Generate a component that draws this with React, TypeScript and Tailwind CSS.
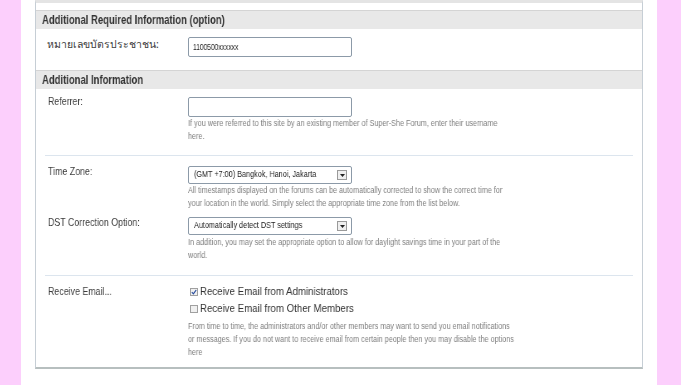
import React from "react";

const FONT = '"Liberation Sans", Arial, sans-serif';

function SelectBox({ text }: { text: string }) {
  return (
    <div className="relative w-[164px] h-[18px] rounded-[2px] border border-[#8c9aa8] bg-white flex items-center pl-[5px] text-[9.3px] text-[#222]">
      <span className="inline-block origin-left scale-x-[0.78] whitespace-nowrap will-change-transform">{text}</span>
      <div className="absolute right-[4px] top-[3px] w-[10px] h-[10px] border border-[#9a9a9a] bg-[#efefef] flex items-center justify-center">
        <svg width="5" height="3" viewBox="0 0 5 3">
          <path d="M0 0 L5 0 L2.5 3 Z" fill="#222" />
        </svg>
      </div>
    </div>
  );
}

function Help({ lines }: { lines: string[] }) {
  return (
    <div className="text-[8.7px] leading-[13px] text-[#7e7e7e]">
      {lines.map((l, i) => (
        <div key={i} className="whitespace-nowrap">
          <span className="inline-block origin-left scale-x-[0.83] will-change-transform">{l}</span>
        </div>
      ))}
    </div>
  );
}

function Label({ text }: { text: string }) {
  return (
    <span className="inline-block origin-left scale-x-[0.79] whitespace-nowrap will-change-transform">{text}</span>
  );
}

function Header({ text }: { text: string }) {
  return (
    <div className="h-[19px] border-t border-[#d4d4d4] bg-[#e8e8e8] pl-[6px] flex items-center text-[12px] font-bold text-[#333]">
      <span className="inline-block origin-left scale-x-[0.79] whitespace-nowrap will-change-transform">{text}</span>
    </div>
  );
}

function Checkbox({ checked }: { checked?: boolean }) {
  return (
    <div className="w-[8px] h-[8px] border border-[#a0a0a0] bg-[#f0f0f0] flex items-center justify-center mr-[2px]">
      {checked && (
        <svg width="6" height="6" viewBox="0 0 6 6">
          <path d="M0.8 3.2 L2.4 4.8 L5.2 1" stroke="#2b4fa0" strokeWidth="1.2" fill="none" />
        </svg>
      )}
    </div>
  );
}

export default function App() {
  return (
    <div
      className="w-[681px] h-[385px] flex bg-white overflow-hidden antialiased"
      style={{ fontFamily: FONT }}
    >
      <div className="w-[21px] bg-[#fccffc]" />
      <div className="flex-1 px-[14px]">
        <div className="h-[369px] border-t-[3px] border-t-[#e4e4e4] border-x border-x-[#c6ced5] border-b-2 border-b-[#b7bfbf] flex flex-col">
          <div className="h-[7px]" />
          <Header text="Additional Required Information (option)" />
          {/* Row 1 */}
          <div className="h-[41px] flex pt-[8px]">
            <div
              className="w-[152px] pl-[11px] text-[10.5px] leading-[14px] text-[#3c3c3c]"
              style={{ fontFamily: '"Noto Sans", "Liberation Sans", sans-serif' }}
            >
              หมายเลขบัตรประชาชน:
            </div>
            <div className="w-[164px] h-[20px] rounded-[2px] border border-[#8c9aa8] bg-white flex items-center pl-[4px] text-[8.3px] text-[#222]">
              <span className="inline-block origin-left scale-x-[0.8] whitespace-nowrap will-change-transform">1100500xxxxxx</span>
            </div>
          </div>
          <Header text="Additional Information" />
          {/* Referrer */}
          <div className="h-[66px] flex">
            <div className="w-[152px] pl-[12px] pt-[5px] text-[11.2px] leading-[14px] text-[#3c3c3c]">
              <Label text="Referrer:" />
            </div>
            <div className="pt-[8px]">
              <div className="w-[164px] h-[20px] rounded-[2px] border border-[#8c9aa8] bg-white" />
              <Help
                lines={[
                  "If you were referred to this site by an existing member of Super-She Forum, enter their username",
                  "here.",
                ]}
              />
            </div>
          </div>
          <div className="mx-[9px] h-px bg-[#dce5ee]" />
          {/* Time zone */}
          <div className="h-[119px] flex flex-col">
            <div className="flex">
              <div className="w-[152px] pl-[12px] pt-[8px] text-[11.2px] leading-[14px] text-[#3c3c3c]">
                <Label text="Time Zone:" />
              </div>
              <div className="pt-[10px]">
                <SelectBox text="(GMT +7:00) Bangkok, Hanoi, Jakarta" />
                <Help
                  lines={[
                    "All timestamps displayed on the forums can be automatically corrected to show the correct time for",
                    "your location in the world. Simply select the appropriate time zone from the list below.",
                  ]}
                />
              </div>
            </div>
            <div className="flex">
              <div className="w-[152px] pl-[12px] pt-[5px] text-[11.2px] leading-[14px] text-[#3c3c3c]">
                <Label text="DST Correction Option:" />
              </div>
              <div className="pt-[7px]">
                <SelectBox text="Automatically detect DST settings" />
                <div className="pt-[1px]">
                  <Help
                    lines={[
                      "In addition, you may set the appropriate option to allow for daylight savings time in your part of the",
                      "world.",
                    ]}
                  />
                </div>
              </div>
            </div>
          </div>
          <div className="mx-[9px] h-px bg-[#dce5ee]" />
          {/* Email */}
          <div className="flex-1 flex">
            <div className="w-[152px] pl-[12px] pt-[8px] text-[11.2px] leading-[14px] text-[#3c3c3c]">
              <Label text="Receive Email..." />
            </div>
            <div className="pt-[7px]">
              <div className="h-[17px] flex items-center text-[11px] text-[#333] pl-[2px]">
                <Checkbox checked />
                <span className="inline-block origin-left scale-x-[0.88] whitespace-nowrap will-change-transform">
                  Receive Email from Administrators
                </span>
              </div>
              <div className="h-[17px] flex items-center text-[11px] text-[#333] pl-[2px]">
                <Checkbox />
                <span className="inline-block origin-left scale-x-[0.88] whitespace-nowrap will-change-transform">
                  Receive Email from Other Members
                </span>
              </div>
              <div className="mt-[3px]">
                <Help
                  lines={[
                    "From time to time, the administrators and/or other members may want to send you email notifications",
                    "or messages. If you do not want to receive email from certain people then you may disable the options",
                    "here",
                  ]}
                />
              </div>
            </div>
          </div>
        </div>
      </div>
      <div className="w-[24px] bg-[#fccffc]" />
    </div>
  );
}
